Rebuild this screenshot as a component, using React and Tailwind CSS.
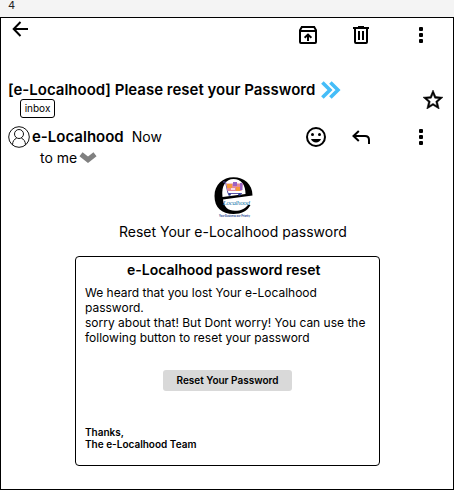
import React from "react";

const Dots = ({ className = "" }) => (
  <svg className={`block ${className}`} width="6" height="18" viewBox="0 0 6 18">
    <rect x="1" y="1" width="4" height="4" rx="1" />
    <rect x="1" y="7" width="4" height="4" rx="1" />
    <rect x="1" y="13" width="4" height="4" rx="1" />
  </svg>
);

const BackIcon = () => (
  <svg className="mt-[3px] ml-[11px] block" width="17" height="16" viewBox="0 0 17 16" fill="none" stroke="#000" strokeWidth="2">
    <path d="M16 8H2M8.5 1 1.7 8l6.8 7" />
  </svg>
);

const UnarchiveIcon = () => (
  <svg className="block" width="18" height="18" viewBox="0 0 18 18" fill="none" stroke="#000" strokeWidth="2">
    <path d="M1 4.2 2.8 1h12.4L17 4.2V16q0 1-1 1H2q-1 0-1-1zM1 5h16" />
    <path d="M9 15V9.500M5.600 11.800 9 8.600l3.400 3.200" />
  </svg>
);

const TrashIcon = () => (
  <svg className="block" width="16" height="18" viewBox="0 0 16 18" fill="none" stroke="#000" strokeWidth="2">
    <path d="M0 2h16M5 1h6M2 2v14q0 1 1 1h10q1 0 1-1V2M6 5v9M10 5v9" />
  </svg>
);

const FastForward = () => (
  <svg className="ml-[6px] block" width="20" height="18" viewBox="0 0 20 18" fill="none" stroke="#45bdf8" strokeWidth="3.6">
    <path d="M1.400 1.400 9 9l-7.600 7.600M9.400 1.400 17 9l-7.600 7.600" />
  </svg>
);

const StarIcon = () => (
  <svg className="block" width="20" height="19" viewBox="2 2 20 19">
    <path d="M22 9.24l-7.19-.62L12 2 9.19 8.63 2 9.24l5.46 4.73L5.82 21 12 17.27 18.18 21l-1.63-7.03zM12 15.4l-3.76 2.27 1-4.28-3.32-2.88 4.38-.38L12 6.1l1.71 4.04 4.38.38-3.32 2.88 1 4.28z" stroke="#000" strokeWidth=".5" />
  </svg>
);

const Avatar = () => (
  <svg className="block" width="22" height="22" viewBox="0 0 22 22" fill="none" stroke="#111" strokeWidth="1">
    <circle cx="11" cy="11" r="10.3" />
    <circle cx="11" cy="8" r="4.5" />
    <path d="M4.5 19c0-3.8 1.9-6 4-6.7M17.5 19c0-3.8-1.9-6-4-6.7" />
  </svg>
);

const SmileIcon = () => (
  <svg className="block" width="20" height="20" viewBox="0 0 20 20">
    <circle cx="10" cy="10" r="9" fill="none" stroke="#000" strokeWidth="2" />
    <circle cx="6.5" cy="7.5" r="1.5" />
    <circle cx="13.5" cy="7.5" r="1.5" />
    <path d="M5 12h10c-.8 2.2-2.7 3.5-5 3.5S5.800 14.200 5 12z" />
  </svg>
);

const ReplyIcon = () => (
  <svg className="block" width="18" height="15" viewBox="0 0 18 15" fill="none" stroke="#000" strokeWidth="2">
    <path d="M6.800 1 1.500 6l5.300 5M1.500 6H13q4 0 4 4v4" />
  </svg>
);

const Logo = () => (
  <svg className="block" width="42" height="42" viewBox="0 0 42 42">
    <path d="M1.500 20C1.500 8.500 10 1.300 20.500 1.300S39.500 8 39.500 19.500L10 23.500c.8 7.500 5 11.300 12 11.300 6 0 10-2 13-5.800h2.500c-3 6-9 9-17 9C8.500 38 1.500 31.500 1.500 20z" />
    <path d="M9.500 21C8 9.500 13 3 20.500 3S32.500 8.500 32.500 18z" fill="#fff" />
    <path d="M12.500 24 39 20.500V29H13z" fill="#fff" />
    <path d="M10 6h2.500l2.500 11.500h14" fill="none" stroke="#5b54a8" strokeWidth="1" />
    <path d="M13 7.500h17L28.500 15H14.500z" fill="#e58a9a" />
    <path d="M14 8h5v4h-5zM23 11h4v4h-4z" fill="#f59b38" />
    <path d="M20 6h4v4h-4zM27 7h2.500v7H27z" fill="#9a63c4" />
    <path d="M18 12h4v2h-4z" fill="#fbdde2" />
    <circle cx="16.500" cy="18.500" r="1.300" fill="#293b91" />
    <circle cx="26.500" cy="18.500" r="1.300" fill="#293b91" />
    <text x="10" y="28.500" fontFamily="Liberation Serif, serif" fontStyle="italic" fontSize="7" textLength="27" fill="#2b7cad">Localhood</text>
    <text x="6" y="40.500" fontFamily="Inter, sans-serif" fontWeight="700" fontSize="2.800" textLength="31" lengthAdjust="spacingAndGlyphs" fill="#233f91">Your Business our Priority</text>
  </svg>
);

export default function App() {
  return (
    <div className="flex h-[490px] w-[454px] flex-col overflow-hidden bg-[#f4f4f4] font-['Inter',sans-serif] text-black">
      <div className="h-[17px] pl-2 text-[11px] leading-[11px] text-[#222]">4</div>
      <main className="flex h-[473px] flex-col border border-black bg-white">
        <header className="flex h-[62px] items-start">
          <BackIcon />
          <div className="mt-2 ml-[270px] flex">
            <UnarchiveIcon />
            <div className="ml-9"><TrashIcon /></div>
            <Dots className="ml-[49px]" />
          </div>
        </header>

        <section className="flex h-[41px]">
          <div className="w-[422px] pl-[7px]">
            <div className="flex h-[19px] items-center">
              <h1 className="text-[15px] leading-[18px] font-semibold whitespace-nowrap">[e-Localhood] Please reset your Password</h1>
              <FastForward />
            </div>
            <div className="ml-3 flex h-[19px] w-[35px] items-center justify-center rounded-[3px] border border-black text-[10px]">inbox</div>
          </div>
          <div className="mt-[10px]"><StarIcon /></div>
        </section>

        <section className="flex h-[55px]">
          <div className="w-[305px] pt-[5px] pl-[7px]">
            <div className="flex h-[22px] items-center whitespace-nowrap">
              <Avatar />
              <span className="ml-[2px] text-[15px] leading-[18px] font-semibold">e-Localhood</span>
              <span className="ml-2 text-[14px] leading-[18px]">Now</span>
            </div>
            <div className="ml-8 flex h-[18px] items-center text-[14px]">
              <span>to me</span>
              <svg className="ml-[2px] block" width="18" height="11" viewBox="0 0 18 11" fill="none" stroke="#808080" strokeWidth="5">
                <path d="M2 2.200 9 7.800l7-5.600" />
              </svg>
            </div>
          </div>
          <div className="mt-[6px] flex h-5 items-center">
            <SmileIcon />
            <div className="ml-[26px]"><ReplyIcon /></div>
            <Dots className="ml-[48px]" />
          </div>
        </section>

        <section className="flex flex-col">
          <div className="ml-[212px] h-[47px]"><Logo /></div>
          <h2 className="h-[32px] pl-[118px] text-[14px] leading-[18px] whitespace-nowrap">Reset Your e-Localhood password</h2>
          <article className="mt-[1px] ml-[74px] flex h-[210px] w-[305px] flex-col rounded-[4px] border border-black px-[9px] pt-[4px]">
            <h3 className="pl-[42px] text-[14px] leading-[17px] font-semibold whitespace-nowrap">e-Localhood password reset</h3>
            <p className="mt-[7px] text-[12px] leading-[15px] whitespace-nowrap">
              We heard that you lost Your e-Localhood<br />password.<br />
              sorry about that! But Dont worry! You can use the<br />following button to reset your password
            </p>
            <button className="mt-[25px] ml-[78px] h-[21px] w-[129px] rounded-[3px] bg-[#d9d9d9] text-[10px] font-semibold whitespace-nowrap">Reset Your Password</button>
            <p className="mt-[35px] text-[10px] leading-[12px] font-semibold">Thanks,<br />The e-Localhood Team</p>
          </article>
        </section>
      </main>
    </div>
  );
}
